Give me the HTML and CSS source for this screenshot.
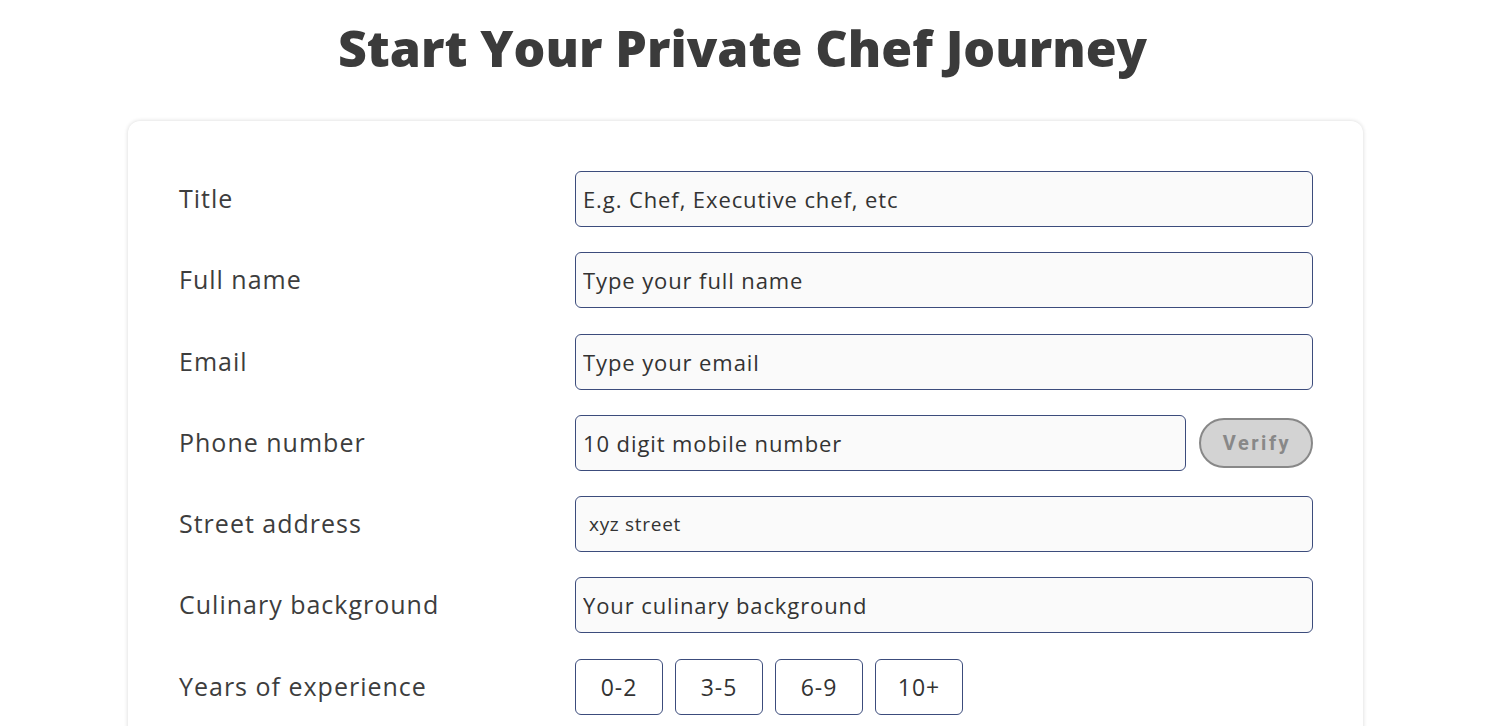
FILE: index.html
```html
<!DOCTYPE html>
<html lang="en">

<head>
    <meta charset="UTF-8">
    <meta name="viewport" content="width=device-width, initial-scale=1.0">
    <title>Private Chef Signup</title>
    <link rel="stylesheet" href="styles.css">
</head>

<body>
    <h1 class="pageTitle">Start Your Private Chef Journey</h1>

    <form class="chefCard">
        <div class="formRow">
            <label for="title">Title</label>
            <input id="title" type="text" placeholder="E.g. Chef, Executive chef, etc">
        </div>
        <div class="formRow">
            <label for="fullname">Full name</label>
            <input id="fullname" type="text" placeholder="Type your full name">
        </div>
        <div class="formRow">
            <label for="email">Email</label>
            <input id="email" type="email" placeholder="Type your email">
        </div>
        <div class="formRow">
            <label for="phone">Phone number</label>
            <div class="phoneBox">
                <input id="phone" type="text" placeholder="10 digit mobile number">
                <button type="button" class="verifyBtn">Verify</button>
            </div>
        </div>
        <div class="formRow">
            <label for="street">Street address</label>
            <input id="street" class="filled" type="text" value="xyz street">
        </div>
        <div class="formRow">
            <label for="culinary">Culinary background</label>
            <input id="culinary" type="text" placeholder="Your culinary background">
        </div>
        <div class="formRow">
            <label>Years of experience</label>
            <ul class="yearsList">
                <li><button type="button">0-2</button></li>
                <li><button type="button">3-5</button></li>
                <li><button type="button">6-9</button></li>
                <li><button type="button">10+</button></li>
            </ul>
        </div>
    </form>
</body>

</html>
```

FILE: styles.css
```css
* {
    padding: 0;
    margin: 0;
    box-sizing: border-box;
    list-style: none;
}

body {
    background: #fff;
    font-family: "Open Sans", "Noto Sans", sans-serif;
    color: #3b3b3b;
}

.pageTitle {
    text-align: center;
    font-size: 50px;
    font-weight: 800;
    line-height: 96px;
    color: #3b3b3b;
    margin-bottom: 25px;
}

.chefCard {
    margin: 0 122px 0 128px;
    padding: 50px 50px 40px 51px;
    background: #fff;
    border-radius: 12px;
    box-shadow: 0 0 4px rgba(0, 0, 0, 0.16);
    display: flex;
    flex-direction: column;
    gap: 25.3px;
}

.formRow {
    display: grid;
    grid-template-columns: 396px 1fr;
    align-items: center;
}

.formRow label {
    font-size: 25px;
    letter-spacing: 1px;
    color: #3d3d3d;
    margin-top: -2px;
}

.formRow input {
    width: 100%;
    height: 56px;
    border: 1px solid #3c4c7c;
    border-radius: 6px;
    background: #fafafa;
    padding: 0 7px;
    font-family: inherit;
    font-size: 22px;
    font-weight: 500;
    letter-spacing: 0.9px;
    color: #333;
    outline: none;
}

.formRow input::placeholder {
    color: #333;
    opacity: 1;
}

.formRow input.filled {
    font-size: 19px;
    letter-spacing: 0.7px;
    padding-left: 13px;
}

.phoneBox {
    display: flex;
    align-items: center;
    gap: 13px;
}

.phoneBox input {
    flex: 1;
}

.verifyBtn {
    width: 114px;
    height: 50px;
    border: 2px solid #888;
    border-radius: 25px;
    background: #d3d3d3;
    color: #888;
    font-family: Roboto, sans-serif;
    font-weight: bold;
    font-size: 20px;
    letter-spacing: 2.5px;
    text-indent: 2px;
}

.yearsList {
    display: flex;
    gap: 12px;
}

.yearsList button {
    width: 88px;
    height: 56px;
    border: 1px solid #3c4c7c;
    border-radius: 6px;
    background: #fff;
    font-family: inherit;
    font-size: 23px;
    letter-spacing: 1px;
    color: #333;
    cursor: pointer;
}
```
